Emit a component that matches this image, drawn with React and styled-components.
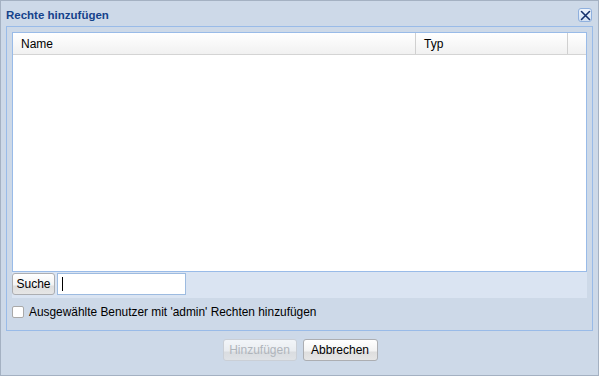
import styled, { createGlobalStyle } from "styled-components";

const GlobalStyle = createGlobalStyle`
  html, body {
    margin: 0;
    padding: 0;
    background: #ffffff;
  }
  body {
    font-family: "Liberation Sans", Arial, sans-serif;
    font-size: 12px;
  }
`;

const columns = [
  { title: "Name", width: 403 },
  { title: "Typ", width: 152 },
  { title: "", width: null },
];

export default function App() {
  return (
    <>
      <GlobalStyle />
      <Window>
        <TitleBar>
          <Title>Rechte hinzufügen</Title>
          <CloseButton aria-label="Schließen">
            <svg width="11" height="11" viewBox="0 0 11 11">
              <path d="M1.5 1.5 L9.5 9.5 M9.5 1.5 L1.5 9.5" stroke="#15306b" strokeWidth="1.6" strokeLinecap="round" />
            </svg>
          </CloseButton>
        </TitleBar>

        <Body>
          <Grid>
            <HeaderRow>
              {columns.map((col, i) => (
                <HeaderCell key={i} $width={col.width}>
                  {col.title}
                </HeaderCell>
              ))}
            </HeaderRow>
            <GridBody />
          </Grid>

          <Toolbar>
            <Button $width={43}>Suche</Button>
            <SearchInput>
              <Caret />
            </SearchInput>
          </Toolbar>

          <CheckRow>
            <CheckBox />
            <span>Ausgewählte Benutzer mit 'admin' Rechten hinzufügen</span>
          </CheckRow>
        </Body>

        <Footer>
          <Button $width={74} disabled>Hinzufügen</Button>
          <Button $width={75}>Abbrechen</Button>
        </Footer>
      </Window>
    </>
  );
}

const Window = styled.div`
  box-sizing: border-box;
  width: 599px;
  height: 376px;
  background: #cdd9e8;
  border: 1px solid #a4b1c2;
  display: flex;
  flex-direction: column;
`;

const TitleBar = styled.div`
  height: 25px;
  display: flex;
  align-items: center;
  justify-content: space-between;
  padding: 0 6px 0 5px;
`;

const Title = styled.div`
  font-family: "Liberation Sans", Arial, sans-serif;
  font-weight: 700;
  font-size: 11.5px;
  color: #15428b;
  padding-top: 2px;
`;

const CloseButton = styled.div`
  box-sizing: border-box;
  width: 14px;
  height: 14px;
  margin-top: 3px;
  border: 1px solid #8fb0de;
  border-radius: 3px;
  background: linear-gradient(#eef4fc, #d3e1f3);
  display: flex;
  align-items: center;
  justify-content: center;
`;

const Body = styled.div`
  box-sizing: border-box;
  margin: 0 5px;
  height: 305px;
  border: 1px solid #99bbe8;
  padding: 5px;
  display: flex;
  flex-direction: column;
`;

const Grid = styled.div`
  box-sizing: border-box;
  height: 240px;
  border: 1px solid #99bbe8;
  background: #ffffff;
  display: flex;
  flex-direction: column;
`;

const HeaderRow = styled.div`
  display: flex;
  height: 21px;
  background: linear-gradient(#ffffff, #f1f1f1);
  border-bottom: 1px solid #d4d4d4;
`;

const HeaderCell = styled.div`
  box-sizing: border-box;
  ${(p) => (p.$width ? `width: ${p.$width}px;` : "flex: 1;")}
  border-right: 1px solid #d0d0d0;
  padding-left: 8px;
  display: flex;
  align-items: center;
  color: #000;
  font-size: 12px;
  &:last-child {
    border-right: none;
  }
`;

const GridBody = styled.div`
  flex: 1;
  background: #ffffff;
`;

const Toolbar = styled.div`
  height: 26px;
  background: #dae4f2;
  display: flex;
  align-items: flex-start;
  gap: 2px;
  padding-top: 1px;
  box-sizing: border-box;
`;

const Button = styled.button`
  box-sizing: border-box;
  height: 22px;
  width: ${(p) => p.$width}px;
  padding: 0;
  border: 1px solid ${(p) => (p.disabled ? "#c9ccd1" : "#acaeb2")};
  border-radius: 3px;
  background: linear-gradient(#ffffff 0%, #f3f3f3 55%, #dedede 60%, #e6e6e6 100%);
  font-family: "Liberation Sans", Arial, sans-serif;
  font-size: 12px;
  color: ${(p) => (p.disabled ? "#a6a9ad" : "#000")};
  opacity: ${(p) => (p.disabled ? 0.75 : 1)};
  cursor: default;
`;

const SearchInput = styled.div`
  box-sizing: border-box;
  width: 129px;
  height: 22px;
  background: #ffffff;
  border: 1px solid #9dbbe0;
  display: flex;
  align-items: center;
  padding-left: 4px;
`;

const Caret = styled.span`
  width: 1px;
  height: 14px;
  background: #000;
`;

const CheckRow = styled.div`
  flex: 1;
  display: flex;
  align-items: center;
  gap: 5px;
  font-size: 11.9px;
  color: #000;
`;

const CheckBox = styled.span`
  box-sizing: border-box;
  width: 12px;
  height: 12px;
  border: 1px solid #a9a9a9;
  border-radius: 2px;
  background: #ffffff;
`;

const Footer = styled.div`
  flex: 1;
  display: flex;
  justify-content: center;
  align-items: flex-start;
  gap: 6px;
  padding-top: 8px;
  padding-left: 1px;
`;
